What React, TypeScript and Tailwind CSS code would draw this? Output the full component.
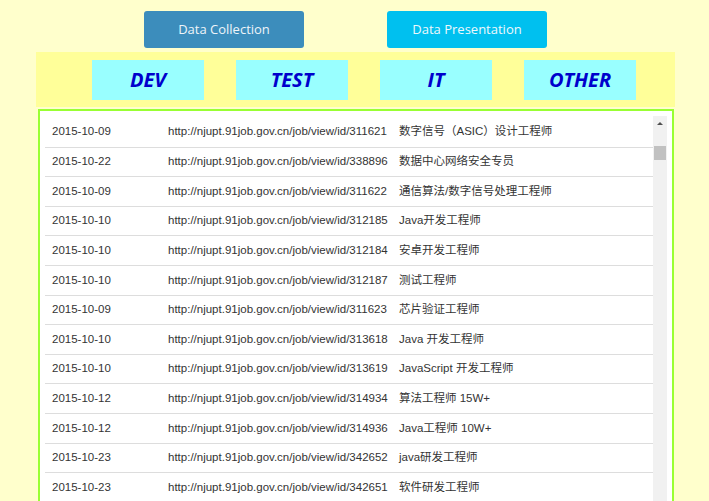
import React from "react";

interface JobRow {
  date: string;
  id: string;
  title: string;
}

const rows: JobRow[] = [
  { date: "2015-10-09", id: "311621", title: "数字信号（ASIC）设计工程师" },
  { date: "2015-10-22", id: "338896", title: "数据中心网络安全专员" },
  { date: "2015-10-09", id: "311622", title: "通信算法/数字信号处理工程师" },
  { date: "2015-10-10", id: "312185", title: "Java开发工程师" },
  { date: "2015-10-10", id: "312184", title: "安卓开发工程师" },
  { date: "2015-10-10", id: "312187", title: "测试工程师" },
  { date: "2015-10-09", id: "311623", title: "芯片验证工程师" },
  { date: "2015-10-10", id: "313618", title: "Java 开发工程师" },
  { date: "2015-10-10", id: "313619", title: "JavaScript 开发工程师" },
  { date: "2015-10-12", id: "314934", title: "算法工程师 15W+" },
  { date: "2015-10-12", id: "314936", title: "Java工程师 10W+" },
  { date: "2015-10-23", id: "342652", title: "java研发工程师" },
  { date: "2015-10-23", id: "342651", title: "软件研发工程师" },
];

const tabs = ["DEV", "TEST", "IT", "OTHER"];

//////////

function Scrollbar() {
  return (
    <div className="w-[14px] shrink-0 bg-[#f1f1f1] relative">
      <div className="h-[17px] flex items-center justify-center">
        <span className="block w-0 h-0 border-l-[3px] border-r-[3px] border-b-[3px] border-transparent border-b-[#505050] -mt-[3px]" />
      </div>
      <div className="absolute left-[1px] right-[1px] top-[30px] h-[14px] bg-[#c1c1c1]" />
    </div>
  );
}

//////////

function JobTable() {
  return (
    <div className="flex-1 overflow-hidden pt-[1px]">
      {rows.map((row, index) => (
        <div
          key={row.id}
          className={`h-[29.6px] flex items-center text-[11.5px] text-[#333] ${
            index > 0 ? "border-t border-[#dddddd]" : ""
          }`}
        >
          <span className="w-[116px] pl-[7px] shrink-0">{row.date}</span>
          <span className="w-[231px] pl-[7px] shrink-0 whitespace-nowrap">
            http://njupt.91job.gov.cn/job/view/id/{row.id}
          </span>
          <span className="pl-[7px] whitespace-nowrap">{row.title}</span>
        </div>
      ))}
      <div className="border-t border-[#dddddd]" />
    </div>
  );
}

//////////

export default function App() {
  return (
    <div className="h-screen overflow-hidden bg-[#ffffcc] font-['Liberation_Sans','Noto_Sans_CJK_SC',sans-serif]">
      <div className="flex pt-[11px] h-[52px]">
        <button className="ml-[144px] w-[160px] h-[37px] rounded-[3px] bg-[#3c8dbc] text-[13px] text-[#eef4f9] font-['Open_Sans',sans-serif]">
          Data Collection
        </button>
        <button className="ml-[83px] w-[160px] h-[37px] rounded-[3px] bg-[#00c0ef] text-[13px] text-[#eef8fc] font-['Open_Sans',sans-serif]">
          Data Presentation
        </button>
      </div>

      <div className="ml-[36px] w-[639px] h-[55px] bg-[#ffff99] flex pt-[8px] pl-[56px] gap-[32px]">
        {tabs.map((tab) => (
          <div
            key={tab}
            className="w-[112px] h-[40px] bg-[#99ffff] flex items-center justify-center text-[20px] font-bold italic text-[#0000cc] font-['Open_Sans',sans-serif]"
          >
            {tab}
          </div>
        ))}
      </div>

      <div className="ml-[38px] mt-[2px] w-[636px] h-[420px] border-2 border-[#99ff33] bg-white flex px-[5px] pt-[5px]">
        <JobTable />
        <Scrollbar />
      </div>
    </div>
  );
}
